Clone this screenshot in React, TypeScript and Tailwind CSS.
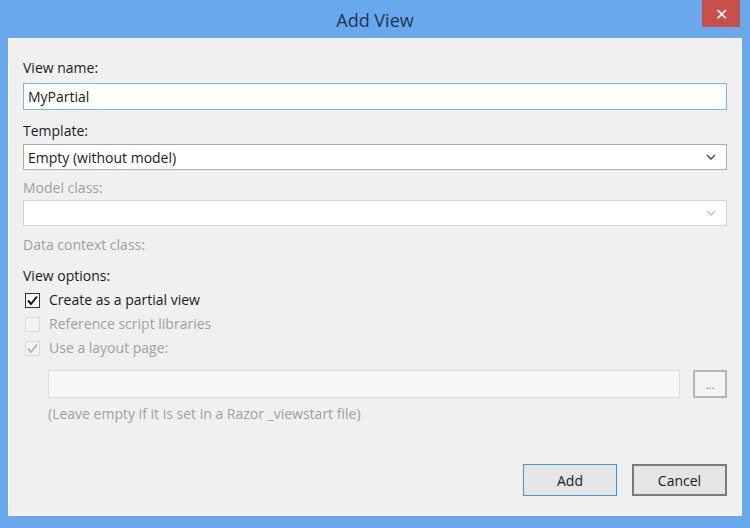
import React from "react";

const font = { fontFamily: '"Open Sans", "Noto Sans", Arial, sans-serif' };

function Chevron({ light }: { light?: boolean }) {
  return (
    <svg width="10" height="6" viewBox="0 0 10 6" className="mr-[6px]">
      <path
        d="M1 1 L5 5 L9 1"
        fill="none"
        stroke={light ? "#c4c4c4" : "#555"}
        strokeWidth="1.6"
      />
    </svg>
  );
}

function Check({ color }: { color: string }) {
  return (
    <svg width="13" height="13" viewBox="0 0 13 13">
      <path d="M2 6.5 L5 10 L11 2.5" fill="none" stroke={color} strokeWidth="2" />
    </svg>
  );
}

export default function App() {
  return (
    <div
      className="w-[750px] h-[528px] bg-[#6aa8ee] flex flex-col px-[8px] pb-[12px] text-[14px]"
      style={font}
    >
      {/* Barra de título */}
      <div className="relative h-[38px] flex items-center justify-center shrink-0">
        <span className="text-[18px] text-[#1d3550] mt-[2px]">Add View</span>
        <div className="absolute top-0 right-[2px] w-[38px] h-[27px] bg-[#c8504a] flex items-center justify-center text-white text-[16px]">
          ✕
        </div>
      </div>

      {/* Corpo */}
      <div className="flex-1 bg-[#f0f0f0] border border-[#fafafa] flex flex-col px-[14px] pt-[19px] pb-[19px] text-[#1a1a1a]">
        <div className="leading-[20px]">View name:</div>
        <div className="mt-[5px] h-[27px] bg-white border border-[#7eb4ea] flex items-center px-[4px]">
          MyPartial
        </div>

        <div className="mt-[11px] leading-[20px]">Template:</div>
        <div className="mt-[3px] h-[26px] bg-white border border-[#acacac] flex items-center justify-between px-[4px]">
          <span>Empty (without model)</span>
          <Chevron />
        </div>

        <div className="mt-[8px] leading-[20px] text-[#a0a0a0]">Model class:</div>
        <div className="mt-[2px] h-[26px] bg-white border border-[#d3d3d3] flex items-center justify-end px-[4px]">
          <Chevron light />
        </div>

        <div className="mt-[9px] leading-[20px] text-[#a0a0a0]">Data context class:</div>

        <div className="mt-[11px] leading-[20px]">View options:</div>
        <div className="mt-[4px] flex items-center gap-[9px] leading-[20px]">
          <div className="w-[15px] h-[15px] border border-[#333] bg-white flex items-center justify-center ml-[2px]">
            <Check color="#111" />
          </div>
          <span>Create as a partial view</span>
        </div>
        <div className="mt-[4px] flex items-center gap-[9px] leading-[20px] text-[#a0a0a0]">
          <div className="w-[15px] h-[15px] border border-[#dadada] bg-[#f3f3f3] ml-[2px]" />
          <span>Reference script libraries</span>
        </div>
        <div className="mt-[4px] flex items-center gap-[9px] leading-[20px] text-[#a0a0a0]">
          <div className="w-[15px] h-[15px] border border-[#dadada] bg-[#f3f3f3] flex items-center justify-center ml-[2px]">
            <Check color="#b8b8b8" />
          </div>
          <span>Use a layout page:</span>
        </div>

        <div className="mt-[12px] flex items-center pl-[25px] gap-[13px]">
          <div className="flex-1 h-[28px] bg-[#f7f7f7] border border-[#dcdcdc]" />
          <div className="w-[34px] h-[28px] bg-[#f3f3f3] border-2 border-[#b5b5b5] flex items-center justify-center text-[11px] text-[#777] leading-none">
            ...
          </div>
        </div>
        <div className="mt-[6px] pl-[25px] leading-[20px] text-[#a0a0a0]">
          (Leave empty if it is set in a Razor _viewstart file)
        </div>

        <div className="mt-auto flex justify-end gap-[15px]">
          <button className="w-[94px] h-[32px] bg-[#e5e5e5] border border-[#3c9ae8] text-[#1a1a1a]">
            Add
          </button>
          <button className="w-[95px] h-[32px] bg-[#e5e5e5] border-2 border-[#7a7a7a] text-[#1a1a1a]">
            Cancel
          </button>
        </div>
      </div>
    </div>
  );
}
